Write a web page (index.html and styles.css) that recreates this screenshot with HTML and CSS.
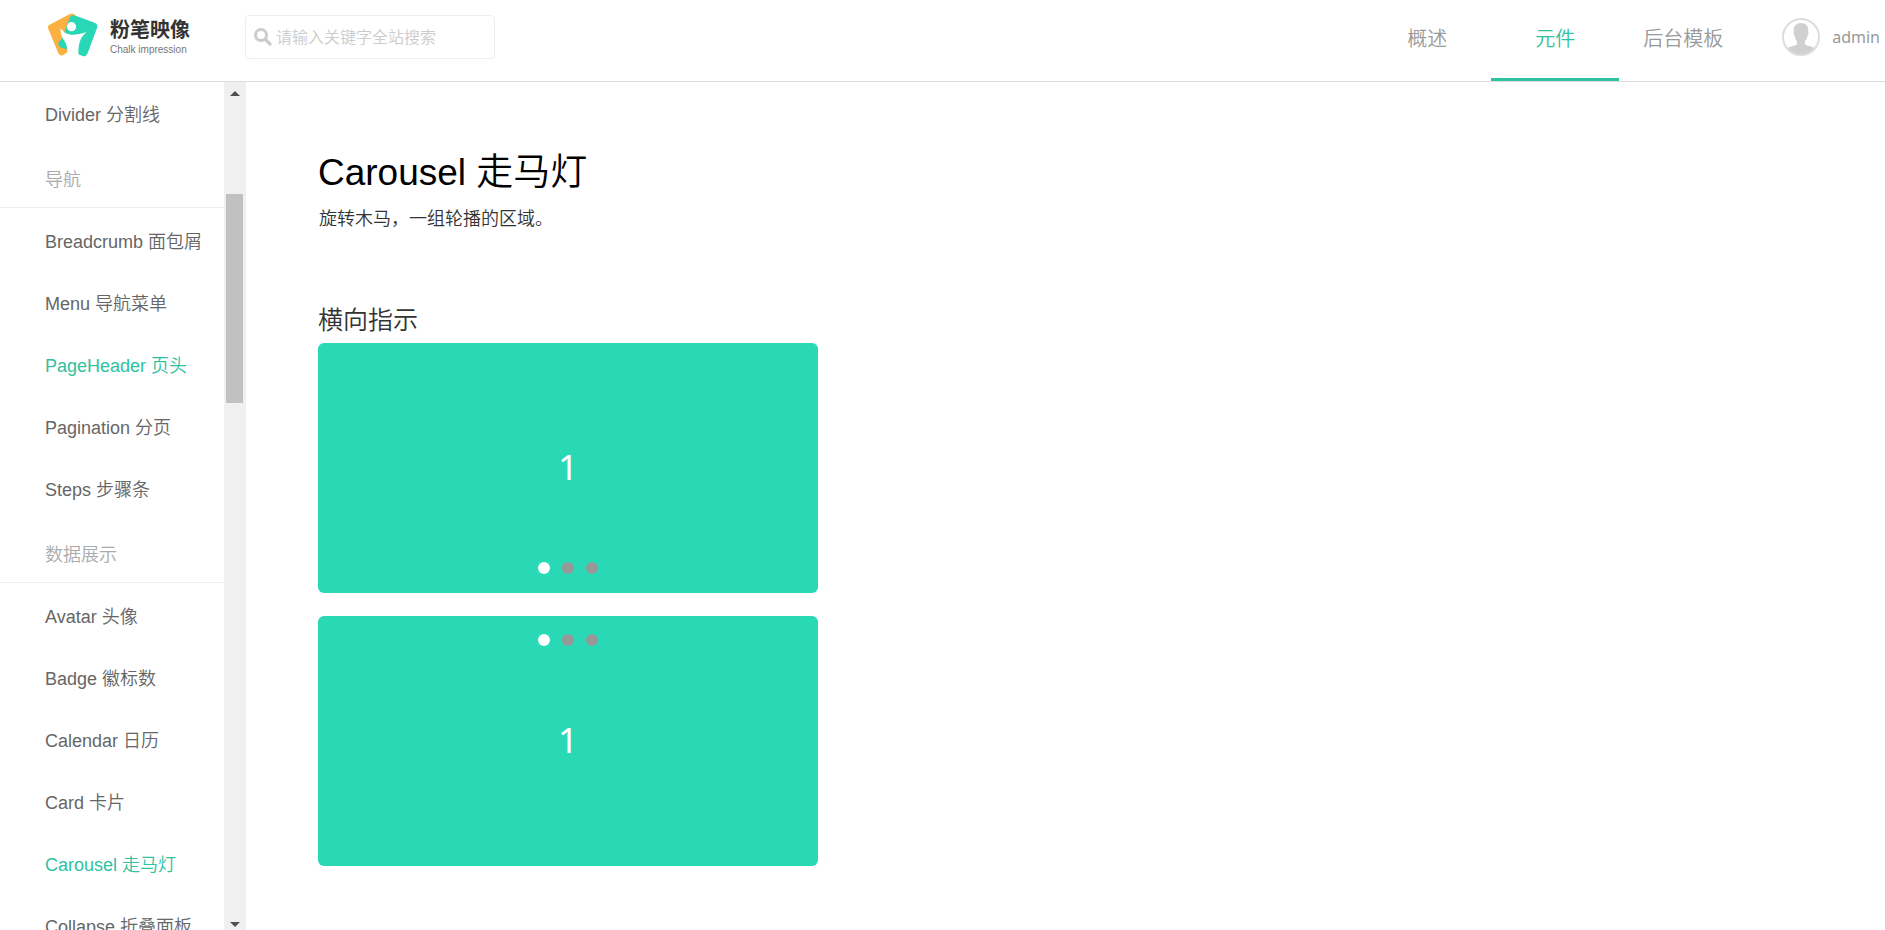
FILE: index.html
```html
<!DOCTYPE html>
<html lang="zh-CN">
<head>
    <meta charset="UTF-8">
    <meta name="viewport" content="width=device-width, initial-scale=1.0">
    <title>Carousel 走马灯</title>
    <link rel="stylesheet" href="styles.css">
</head>
<body>
    <header class="header">
        <a class="logo" href="#">
            <svg class="logo-mark" viewBox="0 0 60 54" aria-hidden="true">
                <path fill="#fbb03f" d="M6 16.500 L26 6 Q29 4.500 31 7 L34 12 L26 43 L19 47 Q16 48.500 14.500 45.500 L4.300 21 Q3 18 6 16.500Z"/>
                <path fill="#27d7b5" d="M31 7.500 L50 14.500 Q54.500 16 53 20 L43.500 45.500 Q42 49 38.500 48 L22 41 L17 39.500 Q13 37.500 15 33.500 Q19 31 20 25 L26 9 Q28 6.500 31 7.500Z"/>
                <circle fill="#fff" cx="27.500" cy="18.700" r="4.600"/>
                <path fill="#fff" d="M16.500 20 Q20 25.500 26 26.500 Q32 27.500 42.500 24 Q36.500 29.500 35.500 35 Q34 40 34.500 48.500 L23 48.500 Q24.500 39 20.500 33 Q16 27 16.500 20Z"/>
            </svg>
            <span class="logo-text">
                <strong>粉笔映像</strong>
                <small>Chalk impression</small>
            </span>
        </a>
        <form class="search">
            <svg class="search-icon" viewBox="0 0 18 18" aria-hidden="true">
                <circle cx="7" cy="7" r="5.5" fill="none" stroke="#ccc" stroke-width="3"/>
                <path d="M11.5 11.5 L16 16" stroke="#ccc" stroke-width="3.4" stroke-linecap="round"/>
            </svg>
            <input type="text" placeholder="请输入关键字全站搜索" aria-label="搜索">
        </form>
        <nav class="nav">
            <a href="#">概述</a>
            <a class="active" href="#">元件</a>
            <a href="#">后台模板</a>
        </nav>
        <a class="user" href="#">
            <svg class="avatar" viewBox="0 0 38 38" aria-hidden="true">
                <circle cx="19" cy="19" r="18" fill="#fff"/>
                <path fill="#d0d0d0" d="M19 5 C24 5 26.500 8 26.200 13 C26.800 14 26.500 17 25.300 18 C24.800 21 24 22 23 23 L23 26 C24 28 30 28 33 30.500 Q27 37 19 37 Q11 37 5 30.500 C8 28 14 28 15 26 L15 23 C14 22 13.200 21 12.700 18 C11.500 17 11.200 14 11.800 13 C11.500 8 14 5 19 5Z"/>
                <circle cx="19" cy="19" r="18" fill="none" stroke="#dcdcdc" stroke-width="2"/>
            </svg>
            <span>admin</span>
        </a>
    </header>

    <div class="container">
        <aside class="sidebar">
            <nav class="menu">
                <a href="#">Divider 分割线</a>
                <h4>导航</h4>
                <a href="#">Breadcrumb 面包屑</a>
                <a href="#">Menu 导航菜单</a>
                <a class="active" href="#">PageHeader 页头</a>
                <a href="#">Pagination 分页</a>
                <a href="#">Steps 步骤条</a>
                <h4>数据展示</h4>
                <a href="#">Avatar 头像</a>
                <a href="#">Badge 徽标数</a>
                <a href="#">Calendar 日历</a>
                <a href="#">Card 卡片</a>
                <a class="active" href="#">Carousel 走马灯</a>
                <a href="#">Collapse 折叠面板</a>
            </nav>
            <div class="scrollbar" aria-hidden="true">
                <span class="arrow up"></span>
                <div class="track">
                    <div class="thumb"></div>
                </div>
                <span class="arrow down"></span>
            </div>
        </aside>

        <main class="content">
            <h1>Carousel 走马灯</h1>
            <p class="desc">旋转木马，一组轮播的区域。</p>
            <h2>横向指示</h2>
            <div class="carousel">
                <span class="slide">1</span>
                <div class="dots">
                    <button class="on" type="button" aria-label="1"></button>
                    <button type="button" aria-label="2"></button>
                    <button type="button" aria-label="3"></button>
                </div>
            </div>
            <div class="carousel dots-top">
                <span class="slide">1</span>
                <div class="dots">
                    <button class="on" type="button" aria-label="1"></button>
                    <button type="button" aria-label="2"></button>
                    <button type="button" aria-label="3"></button>
                </div>
            </div>
        </main>
    </div>
</body>
</html>
```
FILE: styles.css
```css
* {
    box-sizing: border-box;
}
body {
    margin: 0;
    height: 100vh;
    display: flex;
    flex-direction: column;
    overflow: hidden;
    background: #fff;
    color: #333;
    font-family: "Liberation Sans", "Noto Sans CJK SC", sans-serif;
    font-weight: 350;
}
a {
    text-decoration: none;
}
.header {
    flex: none;
    display: flex;
    height: 82px;
    border-bottom: 1px solid #ddd;
}
.logo {
    display: flex;
    width: 245px;
    padding: 8px 0 0 44px;
}
.logo-mark {
    width: 60px;
    height: 54px;
}
.logo-text {
    display: flex;
    flex-direction: column;
    padding: 10px 0 0 6px;
}
.logo-text strong {
    color: #333;
    font-size: 20px;
    font-weight: 700;
    line-height: 25px;
}
.logo-text small {
    color: #777;
    font-size: 10px;
    line-height: 14px;
}
.search {
    display: flex;
    align-items: center;
    gap: 4px;
    width: 250px;
    height: 44px;
    margin-top: 15px;
    padding: 0 8px;
    border: 1px solid #eee;
    border-radius: 4px;
}
.search-icon {
    flex: none;
    width: 18px;
    height: 18px;
}
.search input {
    flex: 1;
    min-width: 0;
    padding: 2px 0 0;
    border: none;
    outline: none;
    font: inherit;
    font-size: 16px;
}
.search input::placeholder {
    color: #ccc;
}
.nav {
    display: flex;
    margin-left: auto;
}
.nav a {
    width: 128px;
    height: 81px;
    padding-top: 3px;
    border-bottom: 3px solid transparent;
    color: #999;
    font-size: 20px;
    line-height: 72px;
    text-align: center;
}
.nav a.active {
    color: #2fc2a0;
    border-bottom-color: #2fc2a0;
}
.user {
    display: flex;
    align-items: center;
    gap: 12px;
    height: 73px;
    padding: 0 5px 0 35px;
    color: #999;
    font-family: "Noto Sans", sans-serif;
    font-size: 16px;
    font-weight: 400;
}
.avatar {
    width: 38px;
    height: 38px;
}
.container {
    flex: 1;
    display: flex;
    min-height: 0;
}
.sidebar {
    flex: none;
    display: flex;
    width: 246px;
}
.menu {
    flex: 1;
    padding-top: 2px;
    overflow: hidden;
}
.menu a {
    display: block;
    height: 62px;
    padding-left: 45px;
    color: #666;
    font-size: 18px;
    line-height: 62px;
    white-space: nowrap;
}
.menu a.active {
    color: #2fc2a0;
}
.menu h4 {
    height: 62px;
    margin: 0 0 3px;
    padding: 4px 0 0 45px;
    border-bottom: 1px solid #eee;
    color: #aaa;
    font-size: 18px;
    font-weight: 350;
    line-height: 60px;
}
.scrollbar {
    display: flex;
    flex-direction: column;
    align-items: center;
    width: 22px;
    background: #f0f0f0;
}
.arrow {
    display: flex;
    align-items: center;
    height: 22px;
}
.arrow::before {
    content: "";
    border: 5px solid transparent;
}
.arrow.up::before {
    border-top: none;
    border-bottom-color: #505050;
}
.arrow.down {
    height: 12px;
}
.arrow.down::before {
    border-bottom: none;
    border-top-color: #505050;
}
.track {
    flex: 1;
    display: flex;
    flex-direction: column;
    width: 18px;
}
.track::before {
    content: "";
    flex: 90;
}
.track::after {
    content: "";
    flex: 515;
}
.thumb {
    flex: 209;
    width: 17px;
    background: #c1c1c1;
}
.content {
    flex: 1;
    padding: 63px 72px 0;
}
h1 {
    margin: 0;
    color: #000;
    font-size: 37px;
    font-weight: 350;
    line-height: 56px;
}
.desc {
    margin: 4px 0 68px;
    padding-left: 1px;
    font-size: 18px;
    line-height: 28px;
}
h2 {
    margin: 0 0 4px;
    font-size: 25px;
    font-weight: 350;
    line-height: 38px;
}
.carousel {
    position: relative;
    display: flex;
    align-items: center;
    justify-content: center;
    width: 500px;
    height: 250px;
    margin-bottom: 23px;
    border-radius: 6px;
    background: #29d9b6;
}
.slide {
    padding-bottom: 4px;
    color: #fff;
    font-family: "Noto Sans", sans-serif;
    font-size: 35px;
    font-weight: 400;
}
.dots {
    position: absolute;
    right: 0;
    bottom: 19px;
    left: 0;
    display: flex;
    justify-content: center;
    gap: 12px;
}
.dots-top .dots {
    top: 18px;
    bottom: auto;
}
.dots button {
    width: 12px;
    height: 12px;
    padding: 0;
    border: none;
    border-radius: 50%;
    background: #999;
    cursor: pointer;
}
.dots button.on {
    background: #fff;
}
```
